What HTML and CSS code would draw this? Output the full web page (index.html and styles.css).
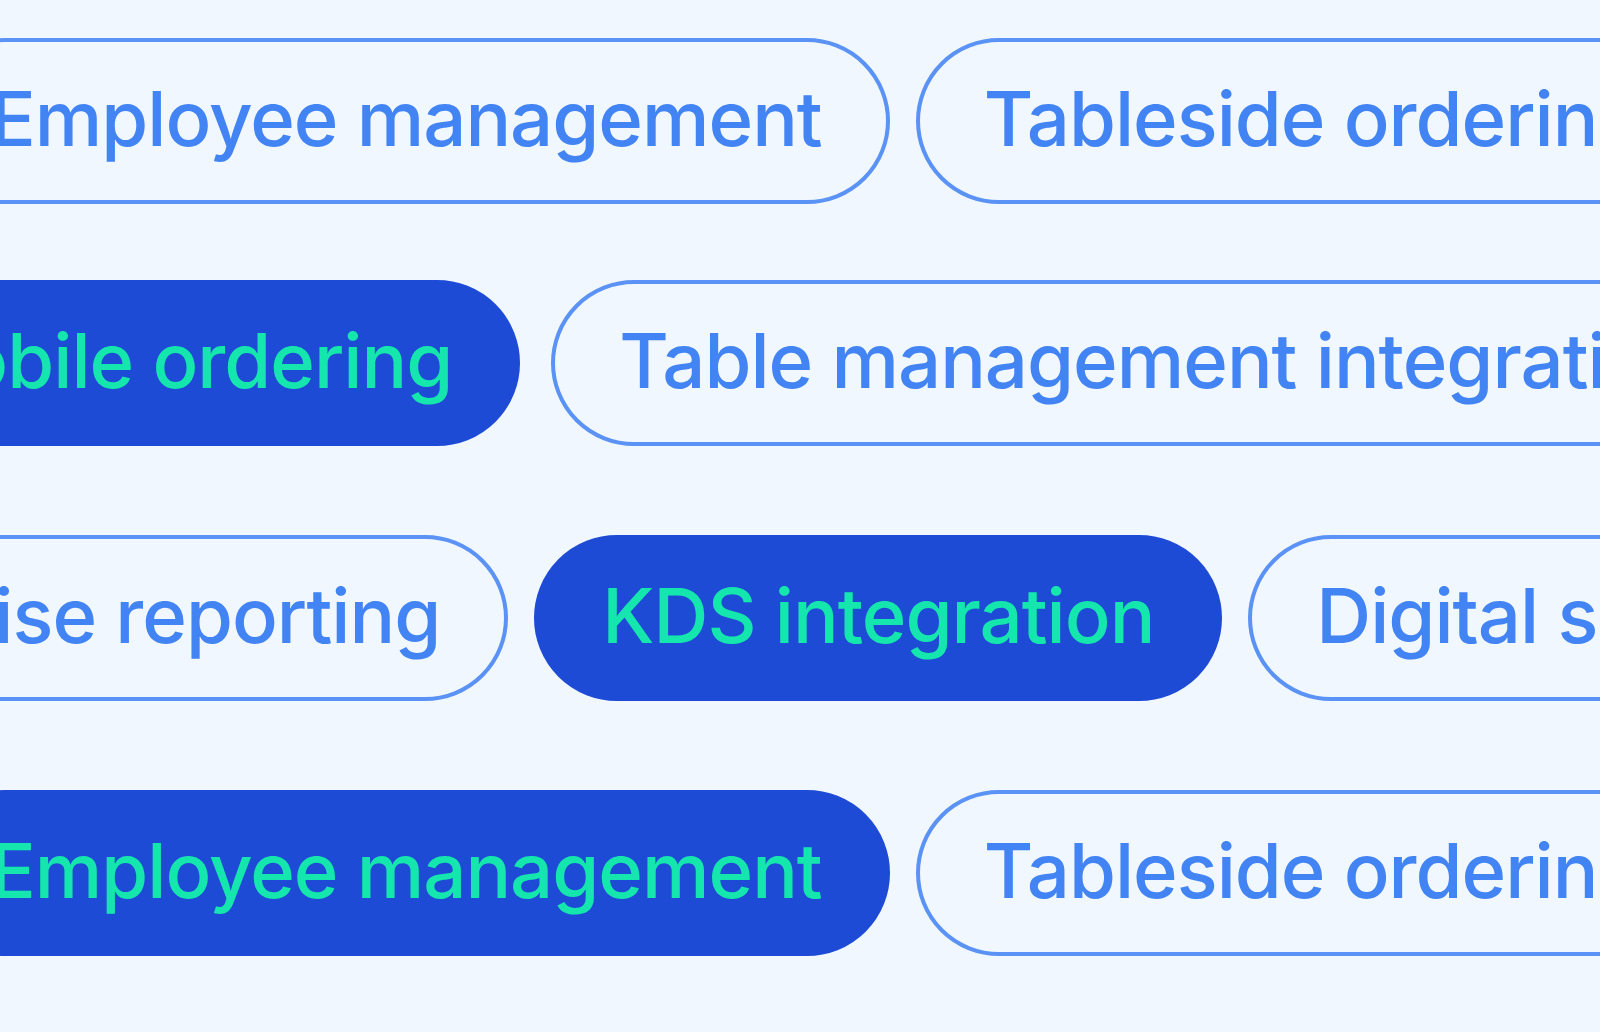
FILE: index.html
```html
<!DOCTYPE html>
<html lang="en">
<head>
<meta charset="utf-8">
<title>Feature tags</title>
<link rel="stylesheet" href="styles.css">
</head>
<body>
<main class="tags">
  <div class="row row-a">
    <span class="pill outline">Employee management</span>
    <span class="pill outline">Tableside ordering</span>
  </div>
  <div class="row row-b">
    <span class="pill filled">Mobile ordering</span>
    <span class="pill outline">Table management integration</span>
  </div>
  <div class="row row-c">
    <span class="pill outline">Franchise reporting</span>
    <span class="pill filled">KDS integration</span>
    <span class="pill outline">Digital signage</span>
  </div>
  <div class="row row-a">
    <span class="pill filled">Employee management</span>
    <span class="pill outline">Tableside ordering</span>
  </div>
</main>
</body>
</html>
```

FILE: styles.css
```css
html, body {
  margin: 0;
  padding: 0;
  background: #f1f7fe;
  overflow: hidden;
}

body {
  width: 1600px;
  height: 1032px;
  font-family: Inter, "Noto Sans", "Liberation Sans", sans-serif;
}

.tags {
  display: flex;
  flex-direction: column;
  gap: 89px;
  padding-top: 38px;
  filter: blur(0.6px);
}

.row {
  display: flex;
  flex-wrap: nowrap;
  gap: 26px;
  white-space: nowrap;
}

.row-a { margin-left: -78px; }
.row-b { margin-left: -174px; margin-top: -13px; }
.row-b .pill + .pill { margin-left: 5px; }
.row-c { margin-left: -318px; }

.pill {
  box-sizing: border-box;
  flex: none;
  display: flex;
  align-items: center;
  height: 166px;
  padding: 0 64px 6px;
  border-radius: 83px;
  border: 4px solid transparent;
  font-size: 76px;
  font-weight: 500;
  letter-spacing: -1px;
}

.outline {
  border-color: #5a92f5;
  color: #4284f4;
  background: #f1f7fe;
}

.filled {
  background: #1e4bd5;
  border-color: #1e4bd5;
  color: #15e6ad;
}
```
